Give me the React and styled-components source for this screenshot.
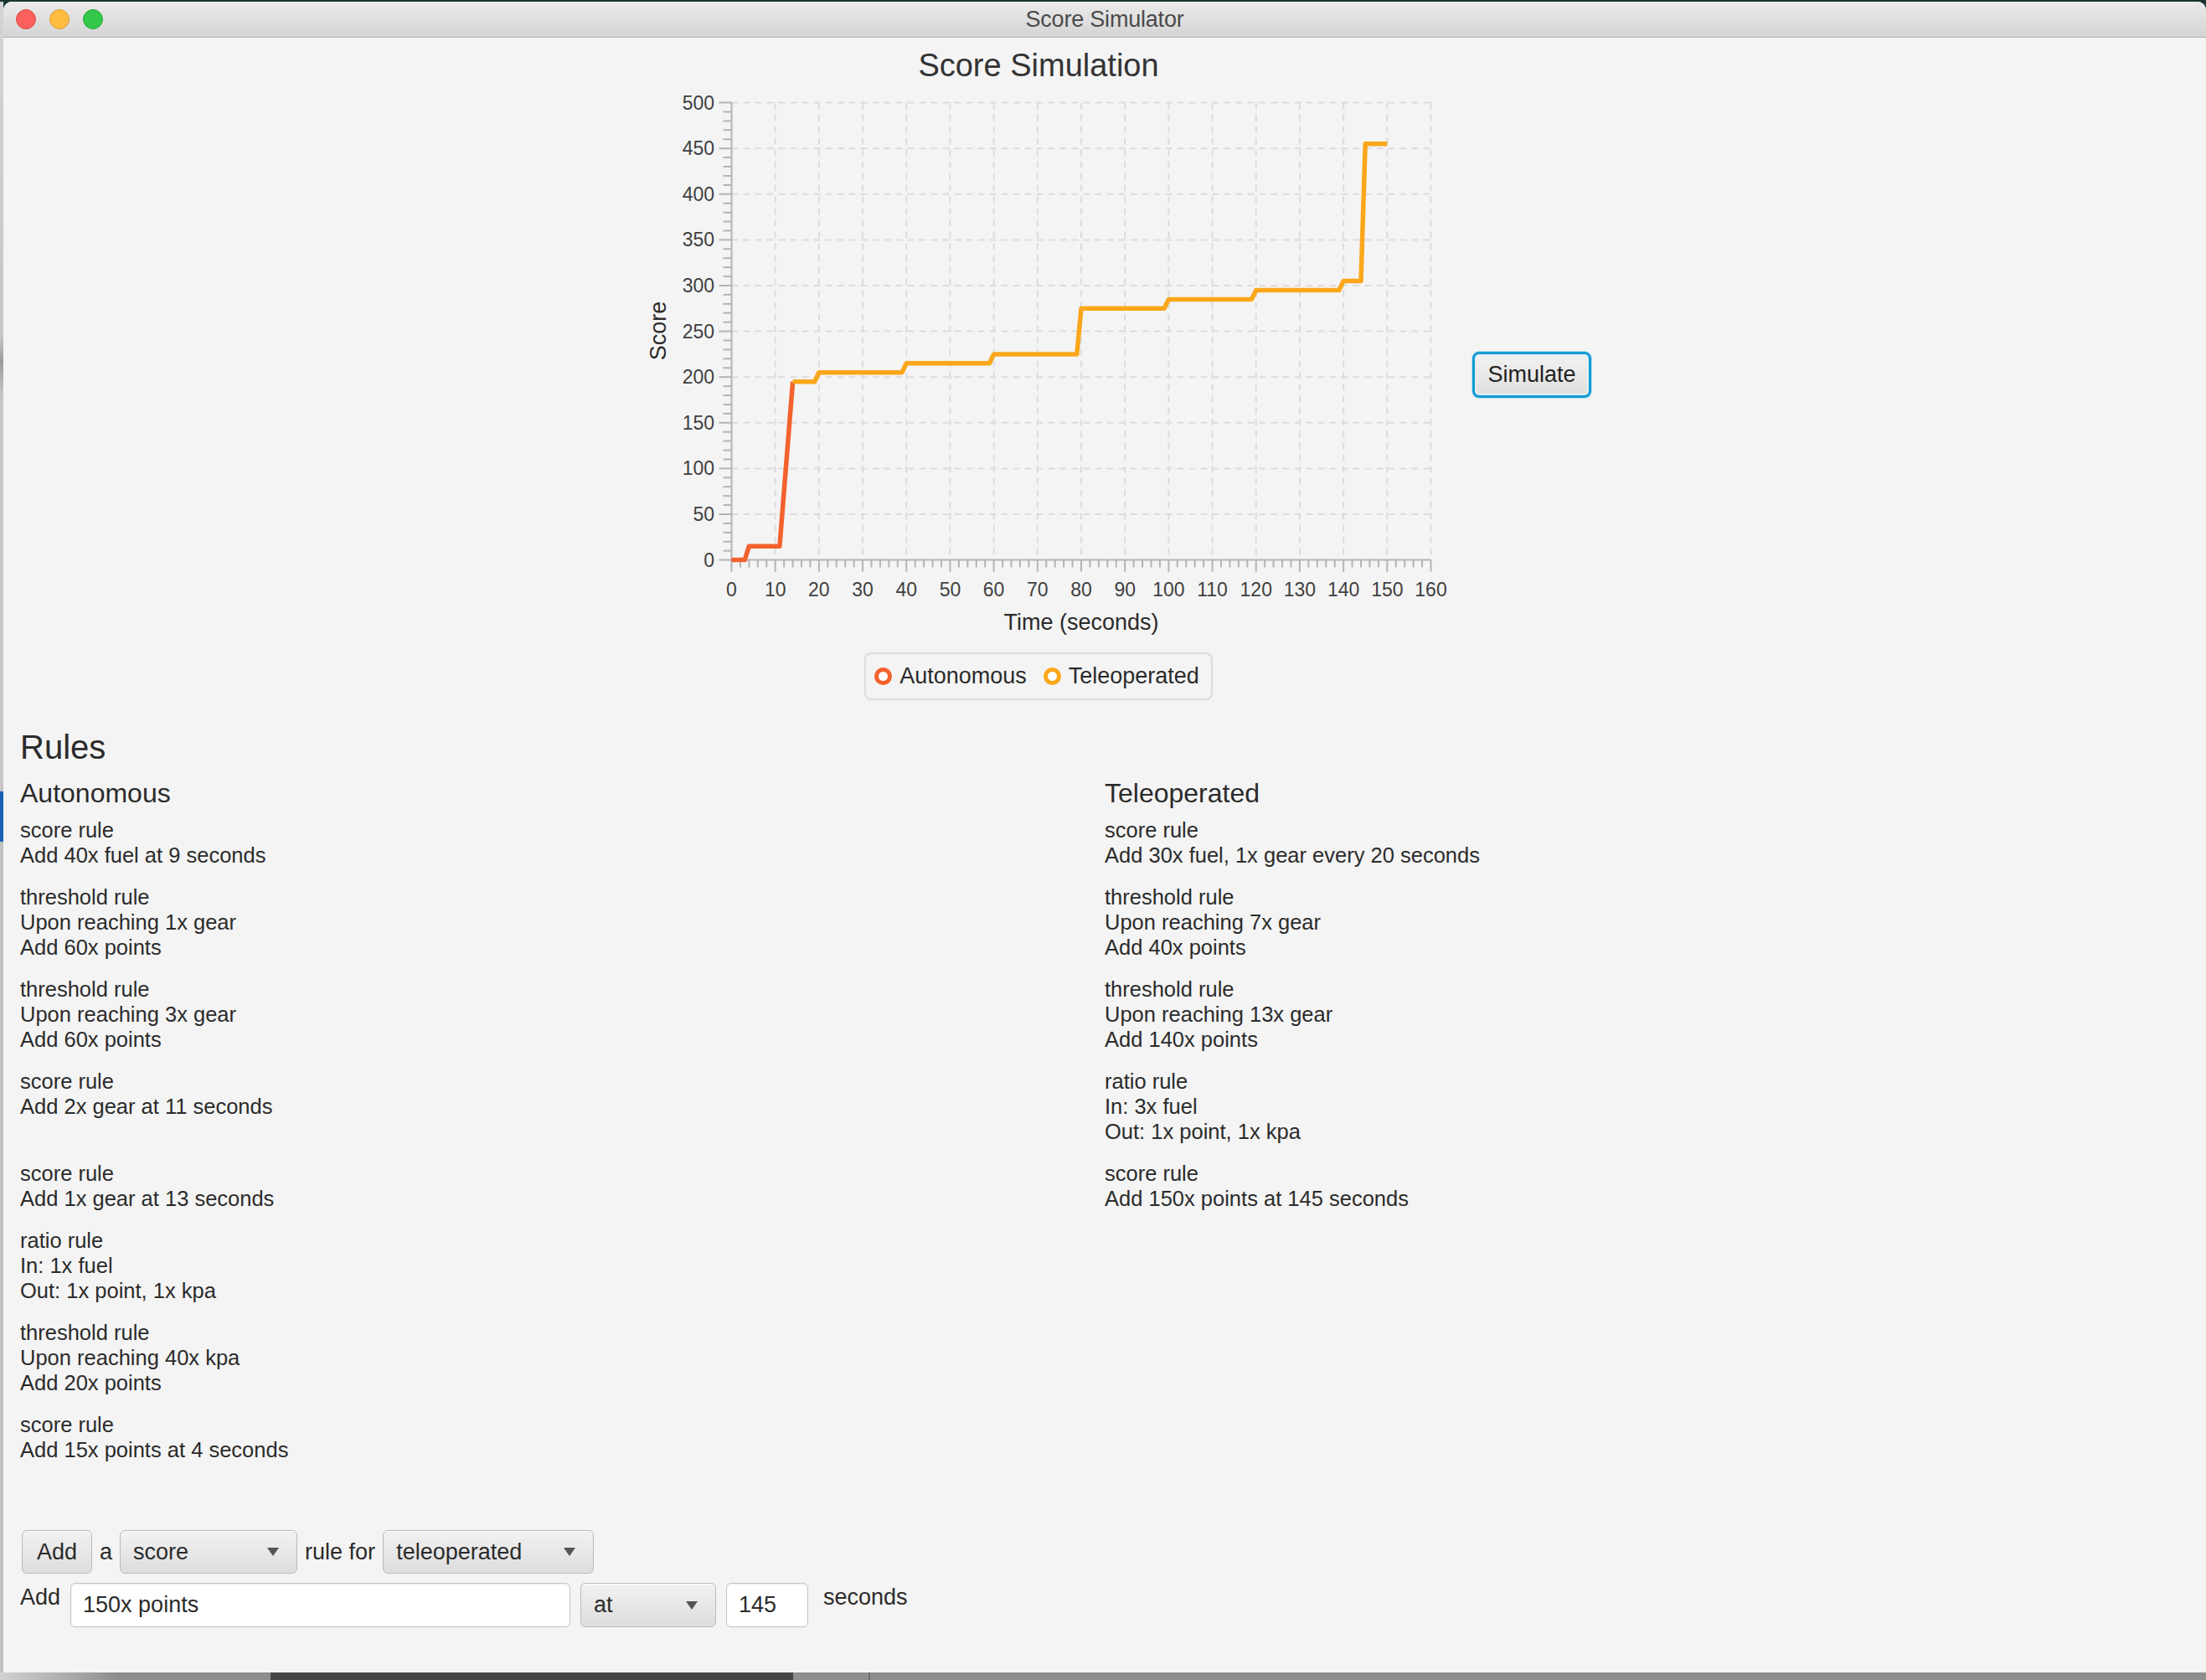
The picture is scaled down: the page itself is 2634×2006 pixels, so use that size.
import React from 'react';
import styled, { createGlobalStyle } from 'styled-components';

const GlobalStyle = createGlobalStyle`
  html, body {
    margin: 0;
    padding: 0;
  }
  body {
    width: 2634px;
    height: 2006px;
    overflow: hidden;
    background: #1a3531;
    font-family: 'Liberation Sans', Arial, sans-serif;
  }
`;

const Desktop = styled.div`
  display: grid;
  grid-template-columns: 4px 1fr;
  grid-template-rows: 1997px 9px;
  width: 2634px;
  height: 2006px;
  background: #1a3531;
`;

const LeftStrip = styled.div`
  margin-top: 2px;
  background: linear-gradient(
    #d4d4d4 0,
    #c6c6c6 400px,
    #9a9a9a 430px,
    #c6c6c6 470px,
    #c6c6c6 943px,
    #1b5fb8 943px,
    #1b5fb8 1003px,
    #c2c2c2 1003px
  );
`;

const Dock = styled.div`
  grid-column: 1 / 3;
  background: linear-gradient(
    90deg,
    #d2d2d2 0,
    #8e8e8e 140px,
    #8e8e8e 323px,
    #474747 323px,
    #474747 947px,
    #8f8f8f 947px,
    #8f8f8f 1037px,
    #6f6f6f 1037px,
    #6f6f6f 1039px,
    #8f8f8f 1039px
  );
`;

const Window = styled.div`
  margin-top: 2px;
  display: flex;
  flex-direction: column;
  background: #f4f4f4;
  border-radius: 10px 10px 0 0;
  overflow: hidden;
`;

const TitleBar = styled.div`
  display: grid;
  grid-template-columns: 1fr auto 1fr;
  align-items: center;
  height: 42px;
  flex-shrink: 0;
  background: linear-gradient(#ebebeb, #d4d4d4);
  border-bottom: 1px solid #b1b1b1;
`;

const Lights = styled.div`
  display: flex;
  gap: 16px;
  padding-left: 15px;
`;

const Light = styled.span`
  width: 24px;
  height: 24px;
  box-sizing: border-box;
  border-radius: 50%;
  background: ${(p) => p.$color};
  border: 1px solid ${(p) => p.$edge};
`;

const WindowTitle = styled.div`
  font-size: 27px;
  color: #4b4b4b;
  letter-spacing: -0.2px;
`;

const Content = styled.div`
  flex: 1;
  display: flex;
  flex-direction: column;
  padding: 0 20px 54px 20px;
  color: #2b2b2b;
`;

const ChartRow = styled.div`
  display: flex;
  justify-content: center;
  align-items: center;
  gap: 38px;
  padding-left: 22px;
`;

const ChartColumn = styled.div`
  width: 960px;
  display: flex;
  flex-direction: column;
  align-items: center;
  padding-top: 10px;
`;

const ChartTitle = styled.div`
  font-size: 38px;
  line-height: 46px;
  color: #333;
`;

const Plot = styled.svg`
  display: block;
  overflow: visible;

  text {
    font-family: 'Liberation Sans', Arial, sans-serif;
  }
  .tick {
    font-size: 23px;
    fill: #3f3f3f;
  }
  .axis-label {
    font-size: 27px;
    fill: #2b2b2b;
  }
`;

const Legend = styled.div`
  margin-top: 18px;
  display: flex;
  align-items: center;
  height: 57px;
  box-sizing: border-box;
  padding: 0 14px 0 10px;
  border: 2px solid #dcdcdc;
  border-radius: 8px;
  font-size: 27px;
  color: #2b2b2b;
`;

const LegendItem = styled.div`
  display: flex;
  align-items: center;
  gap: 9px;
  margin-right: ${(p) => (p.$last ? 0 : 20)}px;
`;

const LegendDot = styled.span`
  width: 21px;
  height: 21px;
  box-sizing: border-box;
  border-radius: 50%;
  border: 5px solid ${(p) => p.$color};
  background: #fff;
`;

const SimulateButton = styled.button`
  margin-top: 14px;
  width: 142px;
  height: 55px;
  box-sizing: border-box;
  border: 3px solid #129bd6;
  border-radius: 8px;
  background: linear-gradient(#f2f2f2, #dfdfdf);
  box-shadow: 0 0 0 1px rgba(18, 155, 214, 0.25), inset 0 0 0 2px #e3eef4;
  font-family: 'Liberation Sans', Arial, sans-serif;
  font-size: 27px;
  color: #222;
  padding: 0;
`;

const RulesTitle = styled.div`
  margin-top: 32px;
  font-size: 40px;
  line-height: 48px;
`;

const RuleColumns = styled.div`
  display: grid;
  grid-template-columns: 1fr 1fr;
  margin-top: 11px;
`;

const ColumnTitle = styled.div`
  font-size: 32px;
  line-height: 40px;
  margin-bottom: 9px;
`;

const RuleGroup = styled.div`
  font-size: 25.5px;
  line-height: 30px;
  margin-bottom: 20px;
`;

const Form = styled.div`
  margin-top: auto;
  display: flex;
  flex-direction: column;
  gap: 11px;
  font-size: 27px;
`;

const FormRow = styled.div`
  display: flex;
  align-items: ${(p) => (p.$top ? 'flex-start' : 'center')};
  gap: ${(p) => p.$gap}px;
  height: ${(p) => p.$height}px;
`;

const Label = styled.span`
  line-height: ${(p) => (p.$top ? '34px' : 'normal')};
  margin-left: ${(p) => p.$offset || 0}px;
`;

const PlainButton = styled.div`
  display: flex;
  align-items: center;
  height: 100%;
  box-sizing: border-box;
  padding: 0 17px;
  margin-left: 2px;
  border: 1px solid #bababa;
  border-radius: 6px;
  background: linear-gradient(#f2f2f2, #dddddd);
  box-shadow: inset 0 1px 0 #fbfbfb;
`;

const Select = styled.div`
  display: flex;
  align-items: center;
  justify-content: space-between;
  width: ${(p) => p.$width}px;
  height: 100%;
  box-sizing: border-box;
  padding: 0 21px 0 15px;
  border: 1px solid #bababa;
  border-radius: 6px;
  background: linear-gradient(#f2f2f2, #dddddd);
  box-shadow: inset 0 1px 0 #fbfbfb;
`;

const Arrow = styled.span`
  width: 0;
  height: 0;
  border-left: 7px solid transparent;
  border-right: 7px solid transparent;
  border-top: 10px solid #555;
`;

const Field = styled.div`
  display: flex;
  align-items: center;
  width: ${(p) => p.$width}px;
  height: 100%;
  box-sizing: border-box;
  padding-left: 14px;
  border: 1px solid #c3c3c3;
  border-radius: 6px;
  background: #fff;
  box-shadow: inset 0 2px 2px rgba(0, 0, 0, 0.05);
`;

const autonomousRules = [
  ['score rule', 'Add 40x fuel at 9 seconds'],
  ['threshold rule', 'Upon reaching 1x gear', 'Add 60x points'],
  ['threshold rule', 'Upon reaching 3x gear', 'Add 60x points'],
  ['score rule', 'Add 2x gear at 11 seconds', '\u00a0'],
  ['score rule', 'Add 1x gear at 13 seconds'],
  ['ratio rule', 'In: 1x fuel', 'Out: 1x point, 1x kpa'],
  ['threshold rule', 'Upon reaching 40x kpa', 'Add 20x points'],
  ['score rule', 'Add 15x points at 4 seconds'],
];

const teleopRules = [
  ['score rule', 'Add 30x fuel, 1x gear every 20 seconds'],
  ['threshold rule', 'Upon reaching 7x gear', 'Add 40x points'],
  ['threshold rule', 'Upon reaching 13x gear', 'Add 140x points'],
  ['ratio rule', 'In: 3x fuel', 'Out: 1x point, 1x kpa'],
  ['score rule', 'Add 150x points at 145 seconds'],
];

const autoSeries = [[0, 0], [3, 0], [4, 15], [11, 15], [14, 195]];
const teleSeries = [
  [14, 195], [19, 195], [20, 205], [39, 205], [40, 215], [59, 215], [60, 225],
  [79, 225], [80, 275], [99, 275], [100, 285], [119, 285], [120, 295], [139, 295],
  [140, 305], [144, 305], [145, 455], [150, 455],
];

const P = { left: 113.5, right: 948.5, top: 21.6, bottom: 567.6 };
const X = (t) => P.left + (t / 160) * (P.right - P.left);
const Y = (v) => P.bottom - (v / 500) * (P.bottom - P.top);

const toPath = (pts) => pts.map(([t, v], i) => `${i ? 'L' : 'M'}${X(t).toFixed(1)} ${Y(v).toFixed(1)}`).join(' ');

const range = (from, to, step) => {
  const out = [];
  for (let v = from; v <= to; v += step) out.push(v);
  return out;
};

const ScoreChart = () => (
  <Plot width="960" height="660" viewBox="0 0 960 660">
    {range(50, 500, 50).map((v) => (
      <line key={`h${v}`} x1={P.left} x2={P.right} y1={Y(v)} y2={Y(v)} stroke="#dcdcdc" strokeWidth="2" strokeDasharray="8 6" />
    ))}
    {range(10, 160, 10).map((t) => (
      <line key={`v${t}`} x1={X(t)} x2={X(t)} y1={P.top} y2={P.bottom} stroke="#dcdcdc" strokeWidth="2" strokeDasharray="8 6" />
    ))}
    <line x1={P.left} x2={P.left} y1={P.top} y2={P.bottom} stroke="#b4b4b4" strokeWidth="2" />
    <line x1={P.left} x2={P.right} y1={P.bottom} y2={P.bottom} stroke="#b4b4b4" strokeWidth="2" />
    {range(0, 500, 10).map((v) => (
      <line key={`yt${v}`} x1={P.left - (v % 50 === 0 ? 15 : 10)} x2={P.left} y1={Y(v)} y2={Y(v)} stroke="#b4b4b4" strokeWidth="2" />
    ))}
    {range(0, 160, 2).map((t) => (
      <line key={`xt${t}`} x1={X(t)} x2={X(t)} y1={P.bottom} y2={P.bottom + (t % 10 === 0 ? 14 : 9)} stroke="#b4b4b4" strokeWidth="2" />
    ))}
    {range(0, 500, 50).map((v) => (
      <text key={`yl${v}`} className="tick" x={93} y={Y(v) + 8} textAnchor="end">{v}</text>
    ))}
    {range(0, 160, 10).map((t) => (
      <text key={`xl${t}`} className="tick" x={X(t)} y={611} textAnchor="middle">{t}</text>
    ))}
    <text className="axis-label" transform="translate(26 294) rotate(-90)" y="9" textAnchor="middle">Score</text>
    <text className="axis-label" x={(P.left + P.right) / 2} y="651" textAnchor="middle">Time (seconds)</text>
    <path d={toPath(autoSeries)} fill="none" stroke="#f3622d" strokeWidth="5.5" strokeLinejoin="round" />
    <path d={toPath(teleSeries)} fill="none" stroke="#fba71b" strokeWidth="5.5" strokeLinejoin="round" />
  </Plot>
);

const RuleList = ({ title, rules }) => (
  <div>
    <ColumnTitle>{title}</ColumnTitle>
    {rules.map((lines, i) => (
      <RuleGroup key={i}>
        {lines.map((line, j) => (
          <div key={j}>{line}</div>
        ))}
      </RuleGroup>
    ))}
  </div>
);

const App = () => (
  <>
    <GlobalStyle />
    <Desktop>
      <LeftStrip />
      <Window>
        <TitleBar>
          <Lights>
            <Light $color="#fc605c" $edge="#de4a46" />
            <Light $color="#fdbc40" $edge="#dea236" />
            <Light $color="#34c84a" $edge="#27aa35" />
          </Lights>
          <WindowTitle>Score Simulator</WindowTitle>
          <div />
        </TitleBar>
        <Content>
          <ChartRow>
            <ChartColumn>
              <ChartTitle>Score Simulation</ChartTitle>
              <ScoreChart />
              <Legend>
                <LegendItem>
                  <LegendDot $color="#f3622d" />
                  Autonomous
                </LegendItem>
                <LegendItem $last>
                  <LegendDot $color="#fba71b" />
                  Teleoperated
                </LegendItem>
              </Legend>
            </ChartColumn>
            <SimulateButton>Simulate</SimulateButton>
          </ChartRow>

          <RulesTitle>Rules</RulesTitle>
          <RuleColumns>
            <RuleList title="Autonomous" rules={autonomousRules} />
            <RuleList title="Teleoperated" rules={teleopRules} />
          </RuleColumns>

          <Form>
            <FormRow $gap={9} $height={52}>
              <PlainButton>Add</PlainButton>
              <Label>a</Label>
              <Select $width={212}>
                score
                <Arrow />
              </Select>
              <Label>rule for</Label>
              <Select $width={252}>
                teleoperated
                <Arrow />
              </Select>
            </FormRow>
            <FormRow $gap={12} $height={53} $top>
              <Label $top>Add</Label>
              <Field $width={597}>150x points</Field>
              <Select $width={162}>
                at
                <Arrow />
              </Select>
              <Field $width={98}>145</Field>
              <Label $top $offset={6}>seconds</Label>
            </FormRow>
          </Form>
        </Content>
      </Window>
      <Dock />
    </Desktop>
  </>
);

export default App;
